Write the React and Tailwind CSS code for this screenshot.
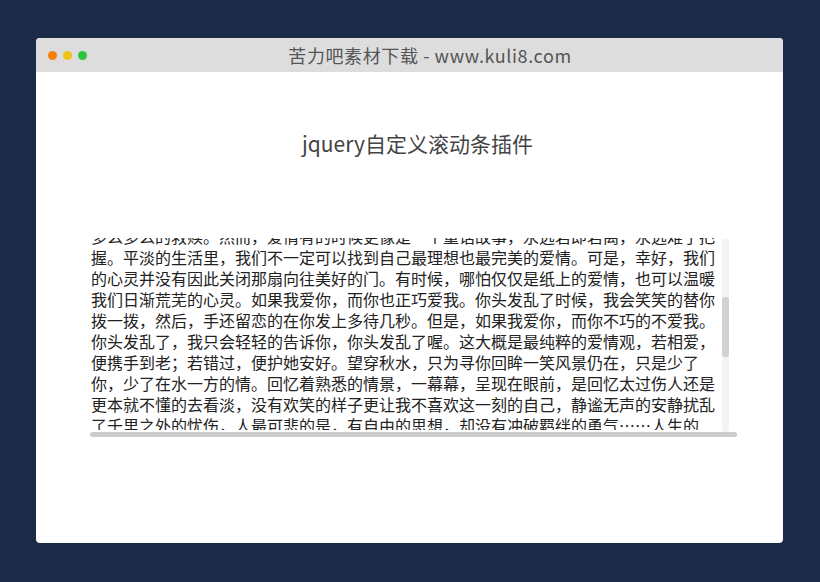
import React from "react";

const lines = [
  "多么多么的救赎。然而，爱情有的时候更像是一个童话故事，永远若即若离，永远难于把",
  "握。平淡的生活里，我们不一定可以找到自己最理想也最完美的爱情。可是，幸好，我们",
  "的心灵并没有因此关闭那扇向往美好的门。有时候，哪怕仅仅是纸上的爱情，也可以温暖",
  "我们日渐荒芜的心灵。如果我爱你，而你也正巧爱我。你头发乱了时候，我会笑笑的替你",
  "拨一拨，然后，手还留恋的在你发上多待几秒。但是，如果我爱你，而你不巧的不爱我。",
  "你头发乱了，我只会轻轻的告诉你，你头发乱了喔。这大概是最纯粹的爱情观，若相爱，",
  "便携手到老；若错过，便护她安好。望穿秋水，只为寻你回眸一笑风景仍在，只是少了",
  "你，少了在水一方的情。回忆着熟悉的情景，一幕幕，呈现在眼前，是回忆太过伤人还是",
  "更本就不懂的去看淡，没有欢笑的样子更让我不喜欢这一刻的自己，静谧无声的安静扰乱",
  "了千里之外的忧伤，人最可悲的是，有自由的思想，却没有冲破羁绊的勇气……人生的",
  "路上，有太多的无奈，我们总是在不停的追寻，追寻那些看似美好的东西。",
];

export default function App() {
  return (
    <div
      className="w-[820px] h-[582px] bg-[#1b2a46] pt-[38px] pl-[36px]"
      style={{ fontFamily: '"Noto Sans CJK SC", "Noto Sans", sans-serif' }}
    >
      <div className="w-[747px] h-[505px] rounded-[4px] bg-white overflow-hidden flex flex-col">
        <div className="h-[34px] bg-[#dddddd] flex items-center shrink-0">
          <div className="flex items-center gap-[6px] pl-[12px]">
            <span className="w-[9px] h-[9px] rounded-full bg-[#f77f0c]" />
            <span className="w-[9px] h-[9px] rounded-full bg-[#efc21a]" />
            <span className="w-[9px] h-[9px] rounded-full bg-[#2fc43f]" />
          </div>
          <div className="flex-1 text-center pr-[10px] text-[18px] leading-[24px] tracking-[0.6px] text-[#555555]">
            苦力吧素材下载 - www.kuli8.com
          </div>
        </div>

        <div className="pt-[56px] pl-[16px] text-center text-[21px] leading-[30px] text-[#444444]">
          jquery自定义滚动条插件
        </div>

        <div className="mt-[80px] ml-[54px] w-[647px] flex flex-col">
          <div className="flex">
            <div className="w-[632px] h-[192px] overflow-hidden pl-[1px] text-[16px] leading-[21px] text-[#222222]">
              <div className="-mt-[12px]">
                {lines.map((l, i) => (
                  <div key={i} className="whitespace-nowrap">
                    {l}
                  </div>
                ))}
              </div>
            </div>
            <div className="w-[7px] h-[193px] mt-[1px] bg-[#f3f3f3] rounded-[3px]">
              <div className="mt-[58px] h-[60px] w-[7px] rounded-[3px] bg-[#d2d2d2]" />
            </div>
          </div>
          <div className="h-[5px] w-[647px] rounded-full bg-[#cccccc]" />
        </div>
      </div>
    </div>
  );
}
